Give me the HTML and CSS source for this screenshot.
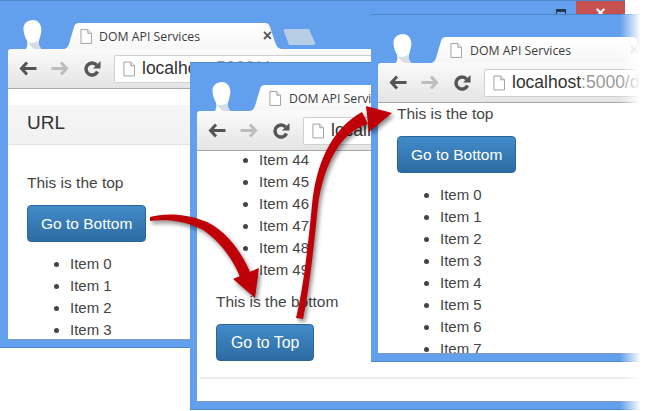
FILE: index.html
```html
<!DOCTYPE html>
<html lang="en">
<head>
<meta charset="utf-8">
<title>DOM API Services</title>
<link rel="stylesheet" href="styles.css">
</head>
<body>
<svg class="defs" width="0" height="0" aria-hidden="true">
  <symbol id="head" viewBox="0 0 19 29">
    <path d="M10 0C4 0 0 4 .5 10 1 15 2.500 18 4 20.500L4.500 25 3 29H18L15.500 24C15.500 21 17 18 18 13 19.500 6 16 0 10 0Z" fill="#fff"/>
    <path d="M5 22c2.500 1.500 6 1.500 10.500 -1.500V24l2.500 5H11C8 27 6 25 5 22Z" fill="#d5dde6"/>
  </symbol>
  <symbol id="page" viewBox="0 0 13 16">
    <path d="M1 .5h7.500l4 4V15.500H1Z" fill="#fff" stroke="#9a9a9a"/>
    <path d="M8.500.5v4h4" fill="#eee" stroke="#9a9a9a"/>
  </symbol>
  <symbol id="back" viewBox="0 0 18 16">
    <path d="M8 2 2.500 8 8 14M3 8H17.500" fill="none" stroke="currentColor" stroke-width="3"/>
  </symbol>
  <symbol id="forward" viewBox="0 0 18 16">
    <path d="M10 2 15.500 8 10 14M15 8H.5" fill="none" stroke="currentColor" stroke-width="3"/>
  </symbol>
  <symbol id="reload" viewBox="0 0 18 17">
    <path d="M14.500 11.500A6 6 0 1 1 13.500 5" fill="none" stroke="currentColor" stroke-width="3.400"/>
    <path d="M17.500 1v7.500H10Z" fill="currentColor"/>
  </symbol>
</svg>

<div class="stage">
  <section class="win win-one">
    <div class="controls">
      <span class="restore"></span>
      <span class="close">×</span>
    </div>
    <header class="titlebar">
      <svg class="head"><use href="#head"/></svg>
      <div class="tab">
        <svg class="tab-page"><use href="#page"/></svg>
        <span class="tab-title">DOM API Services</span>
        <span class="tab-x">×</span>
      </div>
      <span class="newtab"></span>
    </header>
    <div class="toolbar">
      <svg class="nav nav-dark"><use href="#back"/></svg>
      <svg class="nav nav-light"><use href="#forward"/></svg>
      <svg class="nav nav-dark"><use href="#reload"/></svg>
      <div class="omnibox">
        <svg class="omni-page"><use href="#page"/></svg>
        <span class="url">localhost<span class="url-rest">:5000/dom</span></span>
      </div>
    </div>
    <main class="content">
      <div class="urlbar">URL</div>
      <p class="line line-first">This is the top</p>
      <a class="btn">Go to Bottom</a>
      <ul class="items">
        <li>Item 0</li><li>Item 1</li><li>Item 2</li><li>Item 3</li><li>Item 4</li>
      </ul>
    </main>
  </section>

  <section class="win win-two">
    <header class="titlebar">
      <svg class="head"><use href="#head"/></svg>
      <div class="tab">
        <svg class="tab-page"><use href="#page"/></svg>
        <span class="tab-title">DOM API Services</span>
      </div>
    </header>
    <div class="toolbar">
      <svg class="nav nav-dark"><use href="#back"/></svg>
      <svg class="nav nav-light"><use href="#forward"/></svg>
      <svg class="nav nav-dark"><use href="#reload"/></svg>
      <div class="omnibox">
        <svg class="omni-page"><use href="#page"/></svg>
        <span class="url">localhost<span class="url-rest">:5000/dom</span></span>
      </div>
    </div>
    <main class="content">
      <ul class="items items-scrolled">
        <li>Item 44</li><li>Item 45</li><li>Item 46</li><li>Item 47</li><li>Item 48</li><li>Item 49</li>
      </ul>
      <p class="line line-bottom">This is the bottom</p>
      <a class="btn btn-top">Go to Top</a>
      <div class="rule"></div>
    </main>
  </section>

  <section class="win win-three">
    <header class="titlebar">
      <svg class="head"><use href="#head"/></svg>
      <div class="tab">
        <svg class="tab-page"><use href="#page"/></svg>
        <span class="tab-title">DOM API Services</span>
        <span class="tab-x">×</span>
      </div>
    </header>
    <div class="toolbar">
      <svg class="nav nav-dark"><use href="#back"/></svg>
      <svg class="nav nav-light"><use href="#forward"/></svg>
      <svg class="nav nav-dark"><use href="#reload"/></svg>
      <div class="omnibox">
        <svg class="omni-page"><use href="#page"/></svg>
        <span class="url">localhost<span class="url-rest">:5000/dom</span></span>
      </div>
    </div>
    <main class="content">
      <p class="line line-tight">This is the top</p>
      <a class="btn">Go to Bottom</a>
      <ul class="items">
        <li>Item 0</li><li>Item 1</li><li>Item 2</li><li>Item 3</li><li>Item 4</li><li>Item 5</li><li>Item 6</li><li>Item 7</li>
      </ul>
    </main>
  </section>

  <div class="fade"></div>

  <svg class="arrows" viewBox="0 0 650 411" width="650" height="411" aria-hidden="true">
    <g class="arrow">
      <path d="M150 217C165 213 185 213 207 222 228 232 243 255 250 272L240 277C232 257 218 240 203 230 185 220 165 219 150 221Z"/>
      <path d="M233 279 259 268 255 298Z"/>
    </g>
    <g class="arrow">
      <path d="M296 318C304 285 308 245 312 205 316 165 330 130 362 112L368 124C340 132 324 165 318 205 314 245 310 285 303 319Z"/>
      <path d="M366 106 392 113 369 132Z"/>
    </g>
  </svg>
</div>
</body>
</html>
```

FILE: styles.css
```css
* { box-sizing: border-box; }

html, body {
  margin: 0;
  background: #fff;
}

.defs { position: absolute; }

.stage {
  position: relative;
  width: 650px;
  height: 411px;
  overflow: hidden;
  font-family: "Liberation Sans", Arial, sans-serif;
  color: #444;
}

.win {
  position: absolute;
  display: flex;
  flex-direction: column;
  padding: 0 0 7px 8px;
  background: #629fec;
  border-top: 1px solid #4f86c8;
  border-bottom: 1px solid #4f86c8;
  overflow: hidden;
}

.win-one   { left: 0;     top: 0;    width: 625px; height: 348px; }
.win-two   { left: 190px; top: 62px; width: 460px; height: 348px; padding-left: 7px; }
.win-three { left: 371px; top: 14px; width: 279px; height: 348px; padding-left: 7px; }

.controls {
  position: absolute;
  top: 0;
  right: 0;
  display: flex;
  align-items: flex-start;
  gap: 10px;
}

.restore {
  width: 10px;
  height: 12px;
  margin-top: 8px;
  border: 1px solid #25384f;
  border-top-width: 3px;
}

.close {
  width: 49px;
  height: 15px;
  background: #c75050;
  color: #fff;
  font-size: 18px;
  font-weight: 700;
  line-height: 24px;
  text-align: center;
}

.titlebar {
  display: flex;
  flex: none;
  align-items: flex-end;
  height: 48px;
  padding-left: 15px;
}

.head {
  flex: none;
  width: 19px;
  height: 29px;
}

.tab {
  display: flex;
  flex: none;
  align-items: center;
  width: 220px;
  height: 26px;
  margin-left: 21px;
  padding: 0 11px 0 17px;
  background: linear-gradient(#fff, #f7f7f7);
  clip-path: path("M0 26C3 26 5 24 6 21L11 4C12 1 13 0 17 0L201 0C205 0 206 1 207 4L212 19C214 24 215 26 220 26Z");
}

.win-two .tab,
.win-three .tab {
  margin-left: 18px;
  padding-left: 20px;
}

.tab-page {
  flex: none;
  width: 12px;
  height: 15px;
  margin-right: 7px;
}

.win-two .tab-page,
.win-three .tab-page { margin-right: 8px; }

.tab-title {
  flex: 1;
  font-family: "Open Sans", sans-serif;
  font-size: 12.300px;
  color: #3c3c3c;
  white-space: nowrap;
}

.tab-x {
  font-size: 16px;
  font-weight: 700;
  color: #555;
}

.win-three .tab-x { color: #ccc; }

.newtab {
  width: 33px;
  height: 16px;
  margin: 0 0 4px 0;
  background: #b7cde6;
  clip-path: polygon(0 0, 26px 0, 33px 100%, 6px 100%);
  border-radius: 3px;
}

.toolbar {
  display: flex;
  flex: none;
  align-items: center;
  gap: 14px;
  height: 40px;
  padding: 0 0 0 11px;
  background: linear-gradient(#fbfbfb, #e4e4e4);
  border-bottom: 1px solid #a9a9a9;
  border-radius: 3px 0 0 0;
}

.nav {
  flex: none;
  width: 18px;
  height: 17px;
}

.nav-dark { color: #555; }
.nav-light { color: #bdbdbd; }

.omnibox {
  display: flex;
  flex: 1;
  align-items: center;
  height: 28px;
  min-width: 0;
  margin: 0 0 0 -1px;
  padding-left: 8px;
  background: #fff;
  border: 1px solid #d0d0d0;
  border-radius: 2px;
  overflow: hidden;
}

.omni-page {
  flex: none;
  width: 12px;
  height: 16px;
  margin-right: 7px;
}

.url {
  font-size: 17.500px;
  color: #333;
  white-space: nowrap;
}

.url-rest { color: #999; }

.content {
  flex: 1;
  min-height: 0;
  padding-left: 19px;
  background: #fff;
  border-bottom: 1px solid #7e9cbd;
  font-size: 15.500px;
  overflow: hidden;
}

.urlbar {
  height: 40px;
  margin: 16px 0 0 -19px;
  padding-left: 19px;
  background: linear-gradient(#f6f6f6, #f1f1f1);
  border-bottom: 1px solid #e2e2e2;
  font-size: 19px;
  line-height: 36px;
  color: #333;
}

.line {
  margin: 0;
  line-height: 22px;
}

.line-first { margin-top: 27px; margin-bottom: 11px; }
.line-tight { margin-bottom: 11px; }
.line-bottom { margin-top: 10px; margin-bottom: 11px; }

.btn {
  display: inline-block;
  padding: 9px 13px;
  background: linear-gradient(#428bca, #2d6ca2);
  border: 1px solid #2b669a;
  border-radius: 4px;
  color: #fff;
  font-size: 15.500px;
  line-height: 17px;
}

.btn-top {
  padding: 9px 14px;
  font-size: 15.800px;
}

.items {
  margin: 11px 0 0;
  padding: 0 0 0 43px;
  font-size: 15px;
  line-height: 22px;
}

.items-scrolled { margin-top: -2px; }

.rule {
  height: 2px;
  margin: 16px 0 0 -16px;
  background: #ebebeb;
  border-radius: 2px 0 0 2px;
}

.fade {
  position: absolute;
  top: 14px;
  right: 0;
  bottom: 0;
  width: 30px;
  background: linear-gradient(90deg, rgba(255, 255, 255, 0), #fff 68%);
}

.arrows {
  position: absolute;
  inset: 0;
}

.arrow {
  fill: #c00008;
  filter: drop-shadow(2px 3px 2px rgba(0, 0, 0, .45));
}
```
